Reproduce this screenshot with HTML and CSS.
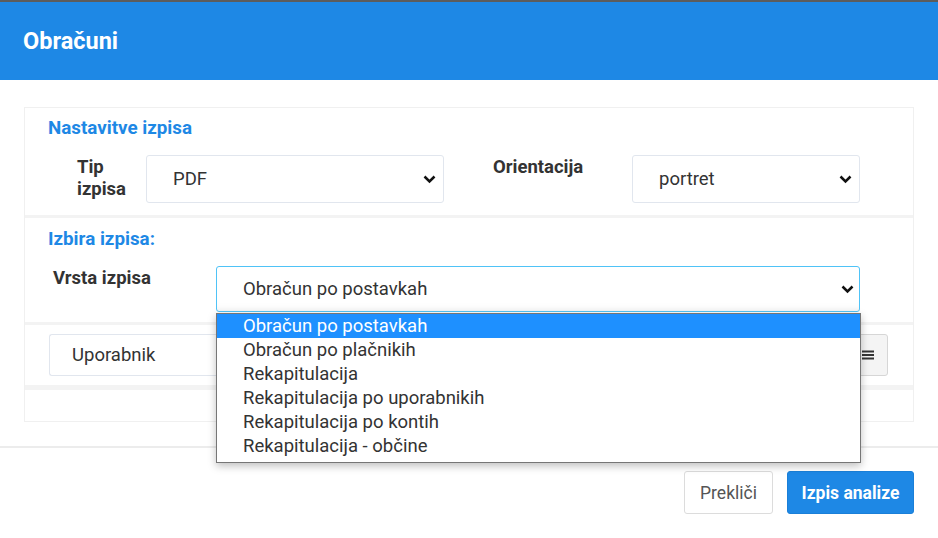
FILE: index.html
```html
<!DOCTYPE html>
<html>
<head>
    <title>Obračuni</title>
    <link rel="stylesheet" href="styles.css">
</head>
<body>
    <div class="topbar"></div>
    <div class="modal-header">
        <h1>Obračuni</h1>
    </div>

    <div class="modal-body">
        <div class="panel">
            <!-- Nastavitve -->
            <div class="section">
                <div class="section-title">Nastavitve izpisa</div>
                <div class="row">
                    <label class="lbl lbl-tip">Tip izpisa</label>
                    <div class="select sel-tip">
                        <span>PDF</span>
                        <svg class="chev" viewBox="0 0 13 9" width="13" height="9"><path d="M1.5 1.5 6.5 6.5l5-5" fill="none" stroke="#111" stroke-width="2.5"/></svg>
                    </div>
                    <label class="lbl lbl-ori">Orientacija</label>
                    <div class="select sel-ori">
                        <span>portret</span>
                        <svg class="chev" viewBox="0 0 13 9" width="13" height="9"><path d="M1.5 1.5 6.5 6.5l5-5" fill="none" stroke="#111" stroke-width="2.5"/></svg>
                    </div>
                </div>
            </div>

            <!-- Izbira -->
            <div class="section section-2">
                <div class="section-title">Izbira izpisa:</div>
                <div class="row">
                    <label class="lbl lbl-vrsta">Vrsta izpisa</label>
                    <div class="select-wrap">
                        <div class="select sel-vrsta focused">
                            <span>Obračun po postavkah</span>
                            <svg class="chev" viewBox="0 0 13 9" width="13" height="9"><path d="M1.5 1.5 6.5 6.5l5-5" fill="none" stroke="#111" stroke-width="2.5"/></svg>
                        </div>
                        <ul class="dropdown">
                            <li class="active">Obračun po postavkah</li>
                            <li>Obračun po plačnikih</li>
                            <li>Rekapitulacija</li>
                            <li>Rekapitulacija po uporabnikih</li>
                            <li>Rekapitulacija po kontih</li>
                            <li>Rekapitulacija - občine</li>
                        </ul>
                    </div>
                </div>
            </div>

            <!-- Uporabnik -->
            <div class="section section-3">
                <div class="input-group">
                    <div class="input">Uporabnik</div>
                    <button class="btn-list">
                        <svg viewBox="0 0 12 10" width="12" height="10"><path d="M0 1.5h12M0 5h12M0 8.5h12" stroke="#333" stroke-width="2"/></svg>
                    </button>
                </div>
            </div>

            <div class="section section-4"></div>
        </div>
    </div>

    <div class="modal-footer">
        <button class="btn btn-default">Prekliči</button>
        <button class="btn btn-primary">Izpis analize</button>
    </div>
</body>
</html>
```

FILE: styles.css
```css
body {
    margin: 0;
    padding: 0;
    font-family: Roboto, "Liberation Sans", Arial, sans-serif;
    color: #333;
    background: #fff;
    width: 938px;
    height: 538px;
    overflow: hidden;
}

.topbar {
    height: 2px;
    background-color: #5c5c5c;
}

.modal-header {
    height: 78px;
    background-color: #1e88e5;
    padding: 0 23px;
    display: flex;
    align-items: center;
}

.modal-header h1 {
    margin: 0;
    color: #fff;
    font-size: 23.5px;
    font-weight: bold;
}

.modal-body {
    padding: 27px 24px 24px 24px;
}

.panel {
    border: 1px solid #f0f0f0;
}

.section {
    padding: 9px 0 12px 0;
}

.section + .section {
    border-top: 3px solid #f3f3f3;
}

.section-title {
    color: #1e88e5;
    font-weight: bold;
    font-size: 18.8px;
    line-height: 22px;
    padding-left: 23px;
    margin-bottom: 16px;
}

.row {
    display: flex;
    align-items: flex-start;
}

.lbl {
    font-weight: bold;
    font-size: 18.5px;
    line-height: 22px;
    color: #333;
}

.lbl-tip {
    margin-left: 52px;
    width: 60px;
    margin-right: 9px;
    padding-top: 1px;
}

.lbl-ori {
    margin-left: 49px;
    width: 139px;
    padding-top: 1px;
}

.lbl-vrsta {
    margin-left: 28px;
    flex: 0 0 163px;
    padding-top: 1px;
}

.select {
    box-sizing: border-box;
    height: 48px;
    border: 1px solid #e1e6ee;
    border-radius: 3px;
    display: flex;
    align-items: center;
    justify-content: space-between;
    padding: 0 7px 0 26px;
    font-size: 18.5px;
    color: #333;
    background: #fff;
}

.sel-tip {
    width: 298px;
}

.sel-ori {
    width: 228px;
}

.select-wrap {
    position: relative;
    width: 644px;
}

.sel-vrsta {
    height: 46px;
    width: 644px;
    padding-right: 5px;
}

.focused {
    border-color: #4fc3f7;
    box-shadow: inset 0 -8px 10px -8px rgba(0, 0, 0, 0.08);
}

.section-2 {
    padding-top: 10px;
    padding-bottom: 10px;
}

/* open list of the select */
.dropdown {
    position: absolute;
    top: 47px;
    left: 0;
    width: 645px;
    box-sizing: border-box;
    margin: 0;
    padding: 0 0 4px 0;
    list-style: none;
    background: #fff;
    border: 1px solid #767676;
    box-shadow: 0 3px 8px rgba(0, 0, 0, 0.25);
    z-index: 10;
}

.dropdown li {
    height: 24px;
    line-height: 24px;
    padding-left: 26px;
    font-size: 18.5px;
    color: #333;
}

.dropdown li.active {
    background-color: #1e90ff;
    color: #fff;
}

.section-3 {
    padding: 9px 25px 9px 24px;
}

.section-3 + .section-4 {
    border-top-width: 5px;
}

.input-group {
    display: flex;
}

.input {
    flex: 1;
    box-sizing: border-box;
    height: 42px;
    border: 1px solid #e1e6ee;
    border-right: none;
    border-radius: 3px 0 0 3px;
    padding-left: 22px;
    display: flex;
    align-items: center;
    font-size: 18.5px;
    color: #333;
}

.btn-list {
    width: 41px;
    height: 42px;
    border: 1px solid #d6d6d6;
    border-radius: 0 3px 3px 0;
    background: #f4f4f4;
    padding: 0;
    display: flex;
    align-items: center;
    justify-content: center;
}

.section-4 {
    height: 31px;
    padding: 0;
}

.modal-footer {
    border-top: 2px solid #ececec;
    padding: 23px 24px 0 24px;
    display: flex;
    justify-content: flex-end;
    gap: 14px;
}

.btn {
    height: 43px;
    border-radius: 3px;
    font-family: Roboto, "Liberation Sans", Arial, sans-serif;
    font-size: 17.5px;
    cursor: pointer;
}

.btn-default {
    width: 89px;
    background: #fff;
    border: 1px solid #dcdcdc;
    color: #555;
}

.btn-primary {
    width: 127px;
    background: #1e88e5;
    border: 1px solid #1a7fd8;
    color: #fff;
    font-weight: bold;
}
```
